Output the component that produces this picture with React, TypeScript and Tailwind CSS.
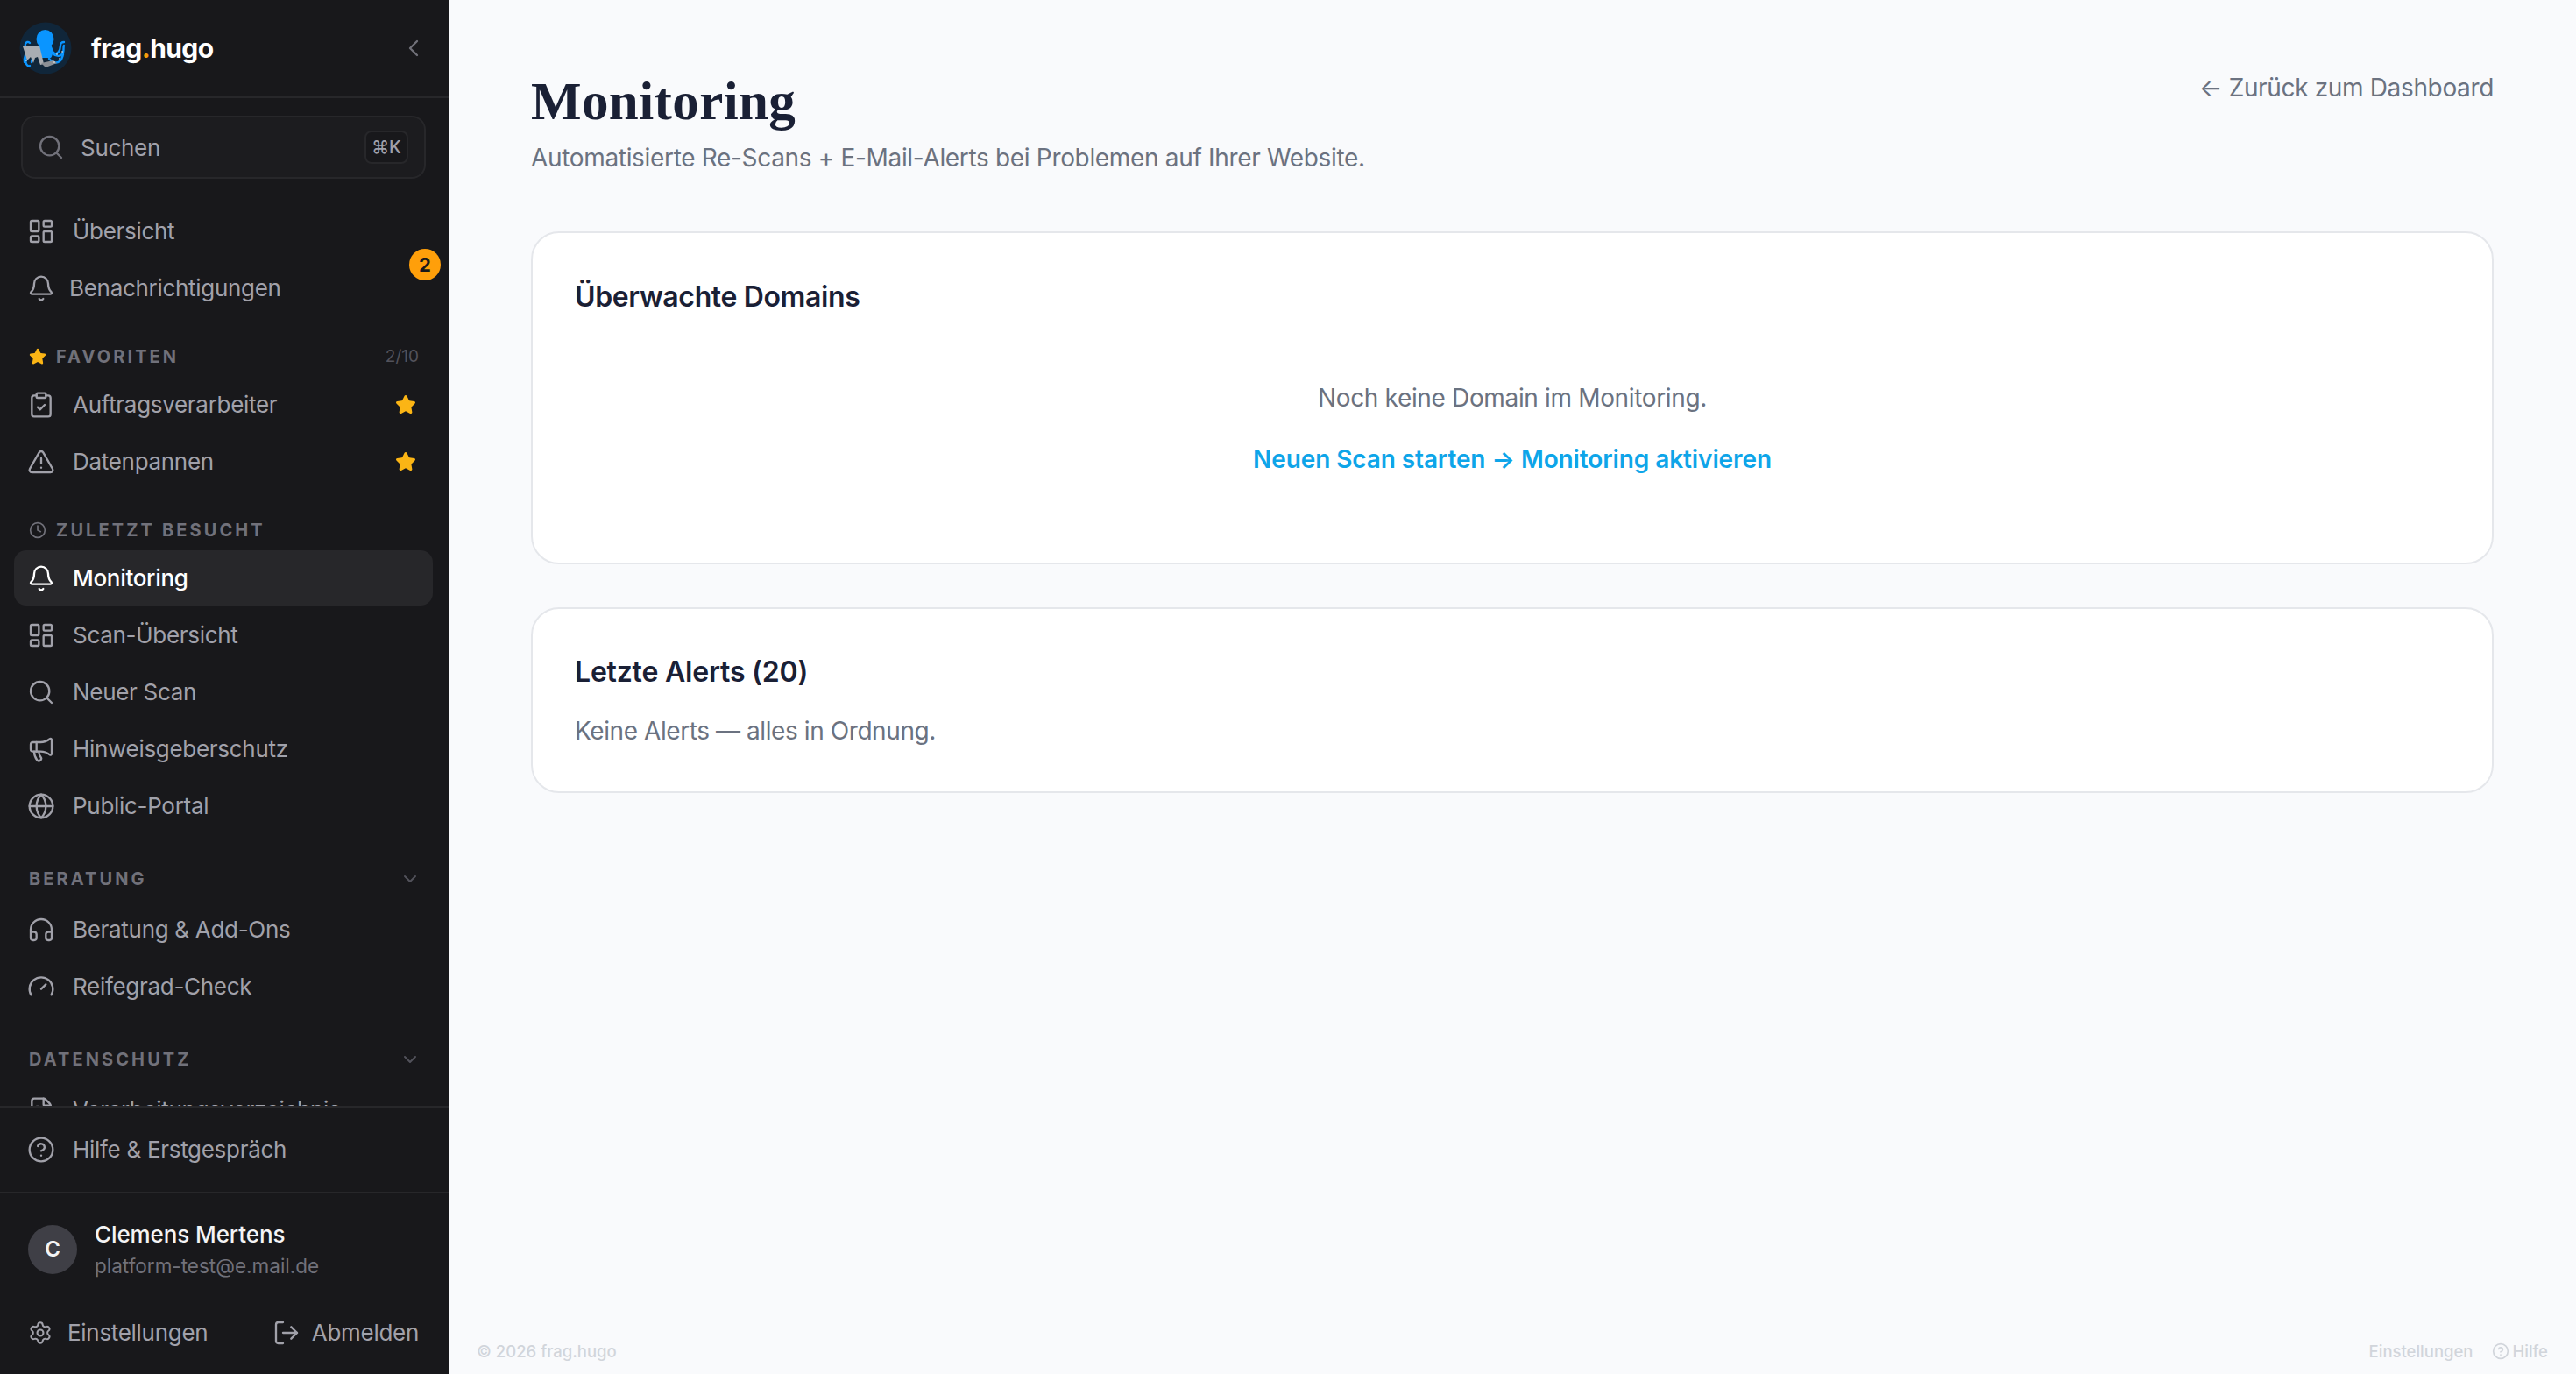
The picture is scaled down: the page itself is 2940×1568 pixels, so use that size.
import type { ComponentType, ReactNode } from "react";
import {
  Bell,
  ChevronDown,
  ChevronLeft,
  CircleHelp,
  ClipboardCheck,
  Clock,
  FileText,
  Gauge,
  Globe,
  Headphones,
  LayoutDashboard,
  LogOut,
  Megaphone,
  Search,
  Settings,
  Star,
  TriangleAlert,
} from "lucide-react";

type IconType = ComponentType<{ className?: string; strokeWidth?: number; fill?: string }>;

function Logo() {
  return (
    <svg viewBox="0 0 60 60" className="h-[60px] w-[60px] shrink-0" aria-hidden>
      <circle cx="30" cy="30" r="29.5" fill="#10263a" />
      <ellipse cx="29.5" cy="19.5" rx="10" ry="10.5" fill="#0a95ff" />
      <path d="M22 26c-1 6 0 12 4 15h10c3-4 3-10 0-15z" fill="#0a95ff" />
      <g fill="none" stroke="#0a95ff" strokeWidth="2.4" strokeLinecap="round">
        <path d="M36 30c2 6 6 8 9 4s1-8 3-10c1-1 2-1 3-1" />
        <path d="M38 36c4 4 10 4 12-1 1-3 0-6 1-8" />
        <path d="M12 24c-2-2-4-1-5 1-1 3 2 5 1 10-1 4-3 6-2 11" />
        <path d="M10 34c-2 6-4 10-2 14 1 2 3 3 4 2" />
        <path d="M34 42c3 4 8 6 12 3 3-2 3-5 4-8" />
        <path d="M17 38c-1 3-3 5-3 8" />
      </g>
      <path d="M4 28l19-1 5 21-4 1-3-9-3 1-2 6-3-7-4 4-3-10z" fill="#a9adb2" />
      <path d="M25 47l14-3 4 3-13 5z" fill="#8b8f95" />
      <g fill="#ffffff">
        <circle cx="43" cy="37" r=".8" />
        <circle cx="46" cy="42" r=".8" />
        <circle cx="49" cy="34" r=".8" />
        <circle cx="40" cy="46" r=".8" />
        <circle cx="8" cy="44" r=".8" />
      </g>
    </svg>
  );
}

function NavItem({
  icon: Icon,
  label,
  active,
  starred,
  tight,
}: {
  icon: IconType;
  label: string;
  active?: boolean;
  starred?: boolean;
  tight?: boolean;
}) {
  return (
    <a
      href="#"
      className={`flex h-[63px] items-center rounded-[14px] pl-[15px] pr-[19px] text-[26px] leading-[40px] tracking-[-0.3px] ${
        tight ? "gap-[16px]" : "gap-[20px]"
      } ${active ? "bg-[#27272a] font-medium text-white" : "text-[#a1a1aa]"}`}
    >
      <Icon className="h-[32px] w-[32px] shrink-0" strokeWidth={1.75} />
      <span className="flex-1 whitespace-nowrap">{label}</span>
      {starred && <Star className="h-[24px] w-[24px] text-[#fbb515]" fill="#fbb515" strokeWidth={2} />}
    </a>
  );
}

function SectionHead({ className, children }: { className: string; children: ReactNode }) {
  return (
    <div className={`flex h-[28px] items-center gap-[11px] pl-[17px] pr-[14px] text-[20px] font-bold tracking-[0.155em] text-[#71717a] ${className}`}>
      {children}
    </div>
  );
}

function Sidebar() {
  return (
    <aside className="flex h-full w-[512px] shrink-0 flex-col bg-[#18181b]">
      <div className="flex h-[112px] shrink-0 items-center border-b-2 border-[#27272a] pl-[22px] pr-[24px]">
        <Logo />
        <span className="ml-[22px] flex-1 text-[30px] font-bold tracking-[-0.02em] text-white">
          frag<span className="text-[#f59e0b]">.</span>hugo
        </span>
        <ChevronLeft className="h-[32px] w-[32px] text-[#71717a]" strokeWidth={1.75} />
      </div>

      <div className="relative min-h-0 flex-1 overflow-hidden pl-[16px] pr-[18px]">
        <div className="ml-[8px] mr-[8px] mt-[20px] flex h-[72px] items-center rounded-[16px] border-2 border-[#27272a] bg-[#1c1c1f] pl-[16px] pr-[18px]">
          <Search className="h-[32px] w-[32px] text-[#71717a]" strokeWidth={1.75} />
          <span className="ml-[18px] flex-1 text-[26px] tracking-[-0.3px] text-[#a1a1aa]">Suchen</span>
          <span className="flex h-[38px] w-[50px] items-center justify-center rounded-[8px] border-2 border-[#27272a] bg-[#18181b] text-[20px] font-medium text-[#a1a1aa]">
            ⌘K
          </span>
        </div>

        <div className="mt-[28px] flex flex-col gap-[2px]">
          <NavItem icon={LayoutDashboard} label="Übersicht" />
          <NavItem icon={Bell} label="Benachrichtigungen" tight />
        </div>
        <span className="absolute left-[467px] top-[172px] flex h-[36px] w-[36px] items-center justify-center rounded-full bg-[#ff9f0a] text-[22px] font-bold text-[#18181b]">
          2
        </span>

        <SectionHead className="mt-[33px] mb-[9px]">
          <Star className="h-[20px] w-[20px] text-[#fbb515]" fill="#fbb515" strokeWidth={2} />
          <span className="flex-1 uppercase">Favoriten</span>
          <span className="mr-[2px] text-[19px] font-normal tracking-normal text-[#52525b]">2/10</span>
        </SectionHead>
        <div className="flex flex-col gap-[2px]">
          <NavItem icon={ClipboardCheck} label="Auftragsverarbeiter" starred />
          <NavItem icon={TriangleAlert} label="Datenpannen" starred />
        </div>

        <SectionHead className="mt-[33px] mb-[9px]">
          <Clock className="h-[20px] w-[20px] text-[#71717a]" strokeWidth={2} />
          <span className="flex-1 uppercase">Zuletzt besucht</span>
        </SectionHead>
        <div className="flex flex-col gap-[2px]">
          <NavItem icon={Bell} label="Monitoring" active />
          <NavItem icon={LayoutDashboard} label="Scan-Übersicht" />
          <NavItem icon={Search} label="Neuer Scan" />
          <NavItem icon={Megaphone} label="Hinweisgeberschutz" />
          <NavItem icon={Globe} label="Public-Portal" />
        </div>

        <SectionHead className="mt-[38px] mb-[12px]">
          <span className="flex-1 uppercase">Beratung</span>
          <ChevronDown className="h-[24px] w-[24px] text-[#52525b]" strokeWidth={2} />
        </SectionHead>
        <div className="flex flex-col gap-[2px]">
          <NavItem icon={Headphones} label="Beratung & Add-Ons" />
          <NavItem icon={Gauge} label="Reifegrad-Check" />
        </div>

        <SectionHead className="mt-[38px] mb-[12px]">
          <span className="flex-1 uppercase">Datenschutz</span>
          <ChevronDown className="h-[24px] w-[24px] text-[#52525b]" strokeWidth={2} />
        </SectionHead>
        <NavItem icon={FileText} label="Verarbeitungsverzeichnis" />
      </div>

      <div className="shrink-0 border-t-2 border-[#27272a] pb-[17px] pl-[16px] pr-[18px] pt-[16px]">
        <NavItem icon={CircleHelp} label="Hilfe & Erstgespräch" />
      </div>

      <div className="h-[208px] shrink-0 border-t-2 border-[#27272a] px-[32px] pt-[28px]">
        <div className="flex items-center gap-[20px]">
          <span className="flex h-[56px] w-[56px] items-center justify-center rounded-full bg-[#3f3f46] text-[24px] font-semibold text-[#f4f4f5]">
            C
          </span>
          <div>
            <div className="text-[26px] font-medium leading-[38px] tracking-[-0.1px] text-[#f4f4f5]">Clemens Mertens</div>
            <div className="text-[22.5px] leading-[34px] text-[#71717a]">platform-test@e.mail.de</div>
          </div>
        </div>
        <div className="mr-[2px] mt-[39px] flex items-center justify-between text-[26px] leading-[40px] tracking-[-0.3px] text-[#a1a1aa]">
          <span className="flex items-center gap-[17px]">
            <Settings className="h-[28px] w-[28px]" strokeWidth={1.75} />
            Einstellungen
          </span>
          <span className="flex items-center gap-[13px]">
            <LogOut className="h-[32px] w-[32px]" strokeWidth={1.75} />
            Abmelden
          </span>
        </div>
      </div>
    </aside>
  );
}

function Main() {
  return (
    <main className="flex h-full min-w-0 flex-1 flex-col bg-[#f9fafc]">
      <div className="flex-1 px-[94px] pt-[72px]">
        <div className="flex items-start justify-between">
          <div>
            <h1 className="font-['Liberation_Serif',serif] text-[61px] font-bold leading-[88px] tracking-[0.4px] text-[#1a2035]">Monitoring</h1>
            <p className="text-[28px] leading-[40px] tracking-[-0.33px] text-[#6b7280]">
              Automatisierte Re-Scans + E-Mail-Alerts bei Problemen auf Ihrer Website.
            </p>
          </div>
          <a href="#" className="mt-[8px] text-[28px] leading-[40px] tracking-[-0.35px] text-[#6b7280]">
            ← Zurück zum Dashboard
          </a>
        </div>

        <section className="mt-[64px] h-[380px] rounded-[32px] border-2 border-[#e5e7eb] bg-white px-[48px] pt-[51px]">
          <h2 className="text-[32px] font-semibold leading-[44px] tracking-[-0.37px] text-[#1a2035]">Überwachte Domains</h2>
          <div className="mt-[73px] text-center">
            <p className="text-[28px] leading-[40px] tracking-[-0.35px] text-[#6b7280]">Noch keine Domain im Monitoring.</p>
            <a href="#" className="mt-[30px] block text-[28px] font-semibold leading-[40px] tracking-[-0.1px] text-[#0ea5e9]">
              Neuen Scan starten → Monitoring aktivieren
            </a>
          </div>
        </section>

        <section className="mt-[49px] h-[212px] rounded-[32px] border-2 border-[#e5e7eb] bg-white px-[48px] pt-[50px]">
          <h2 className="text-[32px] font-semibold leading-[44px] tracking-[-0.2px] text-[#1a2035]">Letzte Alerts (20)</h2>
          <p className="mt-[25px] text-[28px] leading-[40px] tracking-[-0.42px] text-[#6b7280]">Keine Alerts — alles in Ordnung.</p>
        </section>
      </div>

      <footer className="flex h-[50px] shrink-0 items-start justify-between px-[32px] pt-[10px] text-[18.5px] font-medium leading-[28px] text-[#d1d5db]">
        <span>© 2026 frag.hugo</span>
        <span className="flex items-center">
          <span className="mr-[21px]">Einstellungen</span>
          <CircleHelp className="mr-[4px] h-[20px] w-[20px]" strokeWidth={2} />
          Hilfe
        </span>
      </footer>
    </main>
  );
}

export default function App() {
  return (
    <div className="flex h-screen w-full overflow-hidden font-['Inter','Liberation_Sans',sans-serif]">
      <Sidebar />
      <Main />
    </div>
  );
}
